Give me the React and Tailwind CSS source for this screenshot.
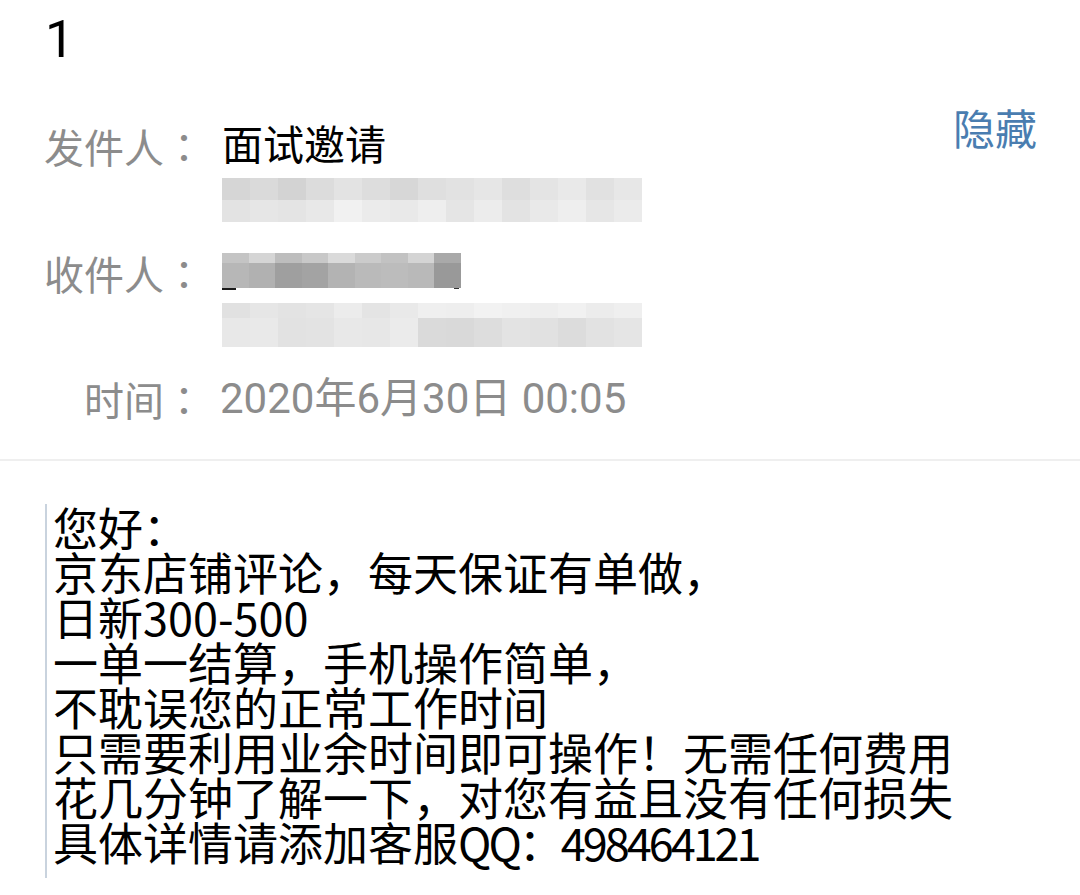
const cjk = "font-['Roboto','Noto_Sans_CJK_SC',sans-serif]";

const senderBlur = [
  ["#d6d6d6", "#dadada", "#d3d3d3", "#dcdcdc", "#e3e3e3", "#dddddd", "#d7d7d7", "#dfdfdf", "#e2e2e2", "#e6e6e6", "#dedede", "#e4e4e4", "#e9e9e9", "#e1e1e1", "#e7e7e7"],
  ["#e3e3e3", "#e6e6e6", "#e4e4e4", "#e8e8e8", "#f1f1f1", "#ebebeb", "#e9e9e9", "#eeeeee", "#e5e5e5", "#ececec", "#e3e3e3", "#e9e9e9", "#eeeeee", "#e6e6e6", "#ebebeb"],
];

const nameBlur = [
  ["#c4c4c4", "#d5d5d5", "#bdbdbd", "#c8c8c8", "#dadada", "#cbcbcb", "#c2c2c2", "#d4d4d4", "#a9a9a9"],
  ["#b7b7b7", "#b1b1b1", "#9f9f9f", "#a3a3a3", "#b3b3b3", "#bababa", "#bcbcbc", "#b9b9b9", "#999999"],
];

const receiverBlur = [
  ["#e1e1e1", "#e6e6e6", "#e3e3e3", "#e5e5e5", "#ececec", "#e4e4e4", "#e9e9e9", "#efefef", "#eeeeee", "#f2f2f2", "#f0f0f0", "#eeeeee", "#f1f1f1", "#ececec", "#efefef"],
  ["#e8e8e8", "#e9e9e9", "#e2e2e2", "#e3e3e3", "#e8e8e8", "#e7e7e7", "#ebebeb", "#dadada", "#d9d9d9", "#dddddd", "#e3e3e3", "#e1e1e1", "#dcdcdc", "#e2e2e2", "#e5e5e5"],
];

function Blur({ rows, heights, block }) {
  return (
    <div className="flex flex-col">
      {rows.map((row, r) => (
        <div key={r} className="flex">
          {row.map((c, i) => (
            <div key={i} style={{ backgroundColor: c, width: block, height: heights[r] }} />
          ))}
        </div>
      ))}
    </div>
  );
}

function Label({ text }) {
  return (
    <div className="w-[204px] pl-[44px] text-right text-[40px] leading-[40px] text-[#8c8c8c] whitespace-nowrap">
      {text}
      <span className="font-['Noto_Sans_CJK_TC',sans-serif]">：</span>
    </div>
  );
}

const bodyLines = [
  ["您好："],
  ["京东店铺评论，每天保证有单做，"],
  ["日新300-500"],
  ["一单一结算，手机操作简单，"],
  ["不耽误您的正常工作时间"],
  ["只需要利用业余时间即可操作！无需任何费用"],
  ["花几分钟了解一下，对您有益且没有任何损失"],
  ["具体详情请添加客服", "QQ：", "498464121"],
];

export default function App() {
  return (
    <div className={`w-[1080px] h-[895px] bg-white overflow-hidden ${cjk}`}>
      <div className="pl-[45px] pt-[14px] text-[52px] leading-[52px] text-black">1</div>

      <div className="flex items-start justify-between pr-[43px] mt-[40px]">
        <div className="flex flex-col pt-[20px]">
          <div className="flex">
            <Label text="发件人" />
            <div className="pl-[18px] flex flex-col">
              <div className="text-[41px] leading-[40px] text-black">面试邀请</div>
              <div className="mt-[12px]">
                <Blur rows={senderBlur} heights={[22, 22]} block={28} />
              </div>
            </div>
          </div>

          <div className="flex mt-[31px]">
            <Label text="收件人" />
            <div className="pl-[18px] flex flex-col">
              <div className="h-[40px] relative">
                <div className="absolute left-0 top-[26px] w-[14px] h-[11px] bg-[#1a1a1a]" />
                <div className="absolute left-[232px] top-[24px] w-[5px] h-[12px] bg-[#333]" />
                <div className="relative">
                  <Blur rows={nameBlur} heights={[10, 25]} block={26.5} />
                </div>
              </div>
              <div className="mt-[10px]">
                <Blur rows={receiverBlur} heights={[15, 29]} block={28} />
              </div>
            </div>
          </div>

          <div className="flex mt-[32px]">
            <Label text="时间" />
            <div className="pl-[16px] text-[42px] leading-[40px] text-[#8c8c8c] whitespace-nowrap">2020年6月30日 00:05</div>
          </div>
        </div>

        <button className="text-[42px] leading-[42px] text-[#4a7db0] font-['Noto_Sans_CJK_SC',sans-serif]">隐藏</button>
      </div>

      <div className="mt-[36px] h-[2px] bg-[#efefef]" />

      <div className="mt-[43px] ml-[45px] border-l-2 border-[#c9d3de] pl-[6px] pb-[14px] font-['Noto_Sans_CJK_SC',sans-serif]">
        {bodyLines.map((parts, i) => (
          <div key={i} className="text-[45px] leading-[45px] text-black whitespace-pre">
            {parts[0]}
            {parts[1] && <span className="tracking-[-3px]">{parts[1]}</span>}
            {parts[2] && <span className="tracking-[-3px]">{parts[2]}</span>}
          </div>
        ))}
      </div>
    </div>
  );
}
